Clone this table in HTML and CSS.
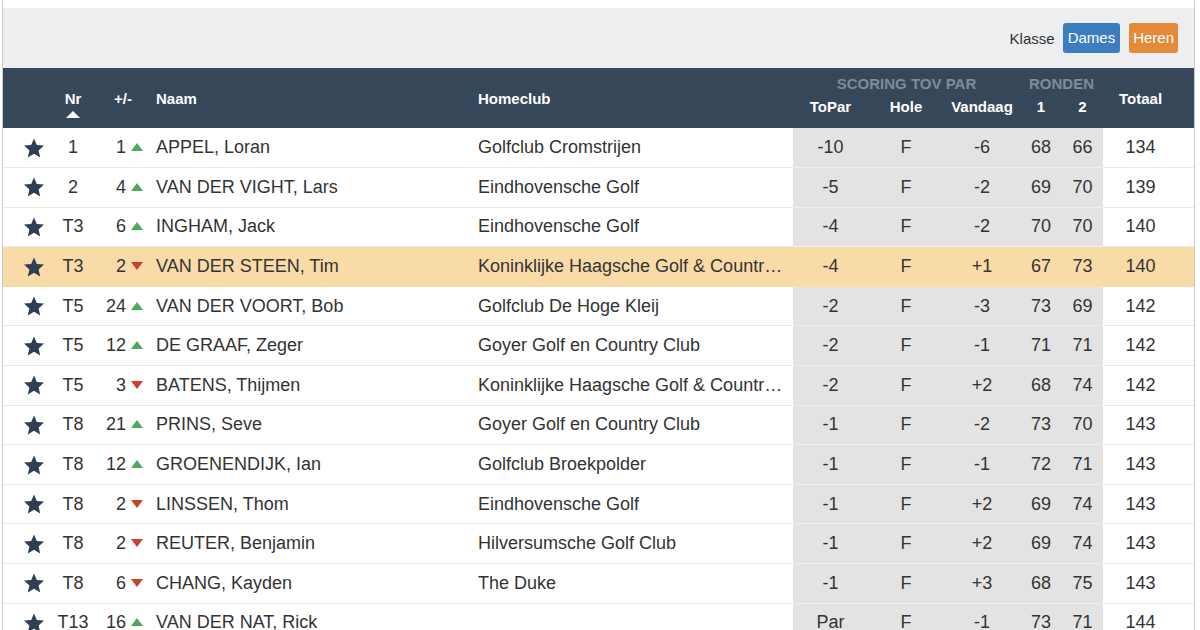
FILE: index.html
```html
<!DOCTYPE html>
<html lang="nl">
<head>
<meta charset="utf-8">
<title>Leaderboard</title>
<link rel="stylesheet" href="styles.css">
</head>
<body>
<div class="page">
  <div class="toolbar">
    <span class="klasse">Klasse</span>
    <span class="btn btn-blue">Dames</span>
    <span class="btn btn-orange">Heren</span>
  </div>
  <table class="board">
    <colgroup>
      <col class="c-star"><col class="c-nr"><col class="c-pm"><col class="c-naam"><col class="c-club">
      <col class="c-topar"><col class="c-hole"><col class="c-vand"><col class="c-r1"><col class="c-r2"><col class="c-tot">
    </colgroup>
    <thead>
      <tr class="h1">
        <th rowspan="2"></th>
        <th rowspan="2" class="center nrh">Nr<span class="sort"></span></th>
        <th rowspan="2" class="left pmh">+/-</th>
        <th rowspan="2" class="left pad">Naam</th>
        <th rowspan="2" class="left pad">Homeclub</th>
        <th colspan="3" class="group">SCORING TOV PAR</th>
        <th colspan="2" class="group">RONDEN</th>
        <th rowspan="2" class="center tot">Totaal</th>
      </tr>
      <tr class="h2">
        <th>ToPar</th><th>Hole</th><th>Vandaag</th><th>1</th><th>2</th>
      </tr>
    </thead>
    <tbody>
      <tr><td class="star"><svg viewBox="0 0 24 24"><path d="M12 1.5l3.1 7.2 7.8.7-5.9 5.2 1.8 7.7L12 18.2l-6.8 4.1 1.8-7.7L1.1 9.4l7.8-.7z"/></svg></td><td class="center">1</td><td class="pm">1<i class="up"></i></td><td class="pad">APPEL, Loran</td><td class="pad club">Golfclub Cromstrijen</td><td class="g">-10</td><td class="g">F</td><td class="g">-6</td><td class="g">68</td><td class="g">66</td><td class="tot">134</td></tr>
      <tr><td class="star"><svg viewBox="0 0 24 24"><path d="M12 1.5l3.1 7.2 7.8.7-5.9 5.2 1.8 7.7L12 18.2l-6.8 4.1 1.8-7.7L1.1 9.4l7.8-.7z"/></svg></td><td class="center">2</td><td class="pm">4<i class="up"></i></td><td class="pad">VAN DER VIGHT, Lars</td><td class="pad club">Eindhovensche Golf</td><td class="g">-5</td><td class="g">F</td><td class="g">-2</td><td class="g">69</td><td class="g">70</td><td class="tot">139</td></tr>
      <tr><td class="star"><svg viewBox="0 0 24 24"><path d="M12 1.5l3.1 7.2 7.8.7-5.9 5.2 1.8 7.7L12 18.2l-6.8 4.1 1.8-7.7L1.1 9.4l7.8-.7z"/></svg></td><td class="center">T3</td><td class="pm">6<i class="up"></i></td><td class="pad">INGHAM, Jack</td><td class="pad club">Eindhovensche Golf</td><td class="g">-4</td><td class="g">F</td><td class="g">-2</td><td class="g">70</td><td class="g">70</td><td class="tot">140</td></tr>
      <tr class="hl"><td class="star"><svg viewBox="0 0 24 24"><path d="M12 1.5l3.1 7.2 7.8.7-5.9 5.2 1.8 7.7L12 18.2l-6.8 4.1 1.8-7.7L1.1 9.4l7.8-.7z"/></svg></td><td class="center">T3</td><td class="pm">2<i class="down"></i></td><td class="pad">VAN DER STEEN, Tim</td><td class="pad club">Koninklijke Haagsche Golf &amp; Country Club</td><td class="g">-4</td><td class="g">F</td><td class="g">+1</td><td class="g">67</td><td class="g">73</td><td class="tot">140</td></tr>
      <tr><td class="star"><svg viewBox="0 0 24 24"><path d="M12 1.5l3.1 7.2 7.8.7-5.9 5.2 1.8 7.7L12 18.2l-6.8 4.1 1.8-7.7L1.1 9.4l7.8-.7z"/></svg></td><td class="center">T5</td><td class="pm">24<i class="up"></i></td><td class="pad">VAN DER VOORT, Bob</td><td class="pad club">Golfclub De Hoge Kleij</td><td class="g">-2</td><td class="g">F</td><td class="g">-3</td><td class="g">73</td><td class="g">69</td><td class="tot">142</td></tr>
      <tr><td class="star"><svg viewBox="0 0 24 24"><path d="M12 1.5l3.1 7.2 7.8.7-5.9 5.2 1.8 7.7L12 18.2l-6.8 4.1 1.8-7.7L1.1 9.4l7.8-.7z"/></svg></td><td class="center">T5</td><td class="pm">12<i class="up"></i></td><td class="pad">DE GRAAF, Zeger</td><td class="pad club">Goyer Golf en Country Club</td><td class="g">-2</td><td class="g">F</td><td class="g">-1</td><td class="g">71</td><td class="g">71</td><td class="tot">142</td></tr>
      <tr><td class="star"><svg viewBox="0 0 24 24"><path d="M12 1.5l3.1 7.2 7.8.7-5.9 5.2 1.8 7.7L12 18.2l-6.8 4.1 1.8-7.7L1.1 9.4l7.8-.7z"/></svg></td><td class="center">T5</td><td class="pm">3<i class="down"></i></td><td class="pad">BATENS, Thijmen</td><td class="pad club">Koninklijke Haagsche Golf &amp; Country Club</td><td class="g">-2</td><td class="g">F</td><td class="g">+2</td><td class="g">68</td><td class="g">74</td><td class="tot">142</td></tr>
      <tr><td class="star"><svg viewBox="0 0 24 24"><path d="M12 1.5l3.1 7.2 7.8.7-5.9 5.2 1.8 7.7L12 18.2l-6.8 4.1 1.8-7.7L1.1 9.4l7.8-.7z"/></svg></td><td class="center">T8</td><td class="pm">21<i class="up"></i></td><td class="pad">PRINS, Seve</td><td class="pad club">Goyer Golf en Country Club</td><td class="g">-1</td><td class="g">F</td><td class="g">-2</td><td class="g">73</td><td class="g">70</td><td class="tot">143</td></tr>
      <tr><td class="star"><svg viewBox="0 0 24 24"><path d="M12 1.5l3.1 7.2 7.8.7-5.9 5.2 1.8 7.7L12 18.2l-6.8 4.1 1.8-7.7L1.1 9.4l7.8-.7z"/></svg></td><td class="center">T8</td><td class="pm">12<i class="up"></i></td><td class="pad">GROENENDIJK, Ian</td><td class="pad club">Golfclub Broekpolder</td><td class="g">-1</td><td class="g">F</td><td class="g">-1</td><td class="g">72</td><td class="g">71</td><td class="tot">143</td></tr>
      <tr><td class="star"><svg viewBox="0 0 24 24"><path d="M12 1.5l3.1 7.2 7.8.7-5.9 5.2 1.8 7.7L12 18.2l-6.8 4.1 1.8-7.7L1.1 9.4l7.8-.7z"/></svg></td><td class="center">T8</td><td class="pm">2<i class="down"></i></td><td class="pad">LINSSEN, Thom</td><td class="pad club">Eindhovensche Golf</td><td class="g">-1</td><td class="g">F</td><td class="g">+2</td><td class="g">69</td><td class="g">74</td><td class="tot">143</td></tr>
      <tr><td class="star"><svg viewBox="0 0 24 24"><path d="M12 1.5l3.1 7.2 7.8.7-5.9 5.2 1.8 7.7L12 18.2l-6.8 4.1 1.8-7.7L1.1 9.4l7.8-.7z"/></svg></td><td class="center">T8</td><td class="pm">2<i class="down"></i></td><td class="pad">REUTER, Benjamin</td><td class="pad club">Hilversumsche Golf Club</td><td class="g">-1</td><td class="g">F</td><td class="g">+2</td><td class="g">69</td><td class="g">74</td><td class="tot">143</td></tr>
      <tr><td class="star"><svg viewBox="0 0 24 24"><path d="M12 1.5l3.1 7.2 7.8.7-5.9 5.2 1.8 7.7L12 18.2l-6.8 4.1 1.8-7.7L1.1 9.4l7.8-.7z"/></svg></td><td class="center">T8</td><td class="pm">6<i class="down"></i></td><td class="pad">CHANG, Kayden</td><td class="pad club">The Duke</td><td class="g">-1</td><td class="g">F</td><td class="g">+3</td><td class="g">68</td><td class="g">75</td><td class="tot">143</td></tr>
      <tr><td class="star"><svg viewBox="0 0 24 24"><path d="M12 1.5l3.1 7.2 7.8.7-5.9 5.2 1.8 7.7L12 18.2l-6.8 4.1 1.8-7.7L1.1 9.4l7.8-.7z"/></svg></td><td class="center">T13</td><td class="pm">16<i class="up"></i></td><td class="pad">VAN DER NAT, Rick</td><td class="pad club"></td><td class="g">Par</td><td class="g">F</td><td class="g">-1</td><td class="g">73</td><td class="g">71</td><td class="tot">144</td></tr>
    </tbody>
  </table>
</div>
</body>
</html>
```

FILE: styles.css
```css
* { box-sizing: border-box; }
html, body { margin: 0; padding: 0; background: #fff; }
body {
  font-family: "Liberation Sans", Arial, sans-serif;
  color: #333;
  height: 630px;
  overflow: hidden;
}
.page {
  margin-left: 2px;
  width: 1193px;
  min-height: 630px;
  border-left: 1px solid #c9c9c9;
  border-right: 1px solid #c9c9c9;
  padding-top: 8px;
}
.toolbar {
  height: 60px;
  background: #eceeef;
  display: flex;
  align-items: center;
  justify-content: flex-end;
  padding-right: 16px;
  gap: 9px;
  font-size: 15px;
}
.klasse { color: #333; margin-right: -1px; }
.btn {
  height: 30px;
  line-height: 30px;
  padding: 0 5px;
  border-radius: 3px;
  color: #fff;
}
.btn-blue { background: #3b7dbf; }
.btn-orange { background: #e38a3b; padding: 0 4px; }

.board {
  width: 1191px;
  border-collapse: collapse;
  table-layout: fixed;
}
.c-star { width: 50px; }
.c-nr { width: 40px; }
.c-pm { width: 55px; }
.c-naam { width: 322px; }
.c-club { width: 323px; }
.c-topar { width: 75px; }
.c-hole { width: 76px; }
.c-vand { width: 76px; }
.c-r1 { width: 42px; }
.c-r2 { width: 41px; }
.c-tot { width: 91px; }

thead { background: #36475a; color: #fff; }
thead th {
  font-size: 15px;
  font-weight: bold;
  padding: 0;
  line-height: 17px;
  white-space: nowrap;
}
.h1 { height: 30px; }
.h2 { height: 30px; }
.h1 th { vertical-align: middle; }
.h1 th[rowspan] { vertical-align: middle; }
.h2 th { vertical-align: top; text-align: center; }
th.group { color: #7e8c9b; text-align: center; }
th.left { text-align: left; }
th.pad { padding-left: 8px; }
th.pmh { padding-left: 21px; }
th.center { text-align: center; }
th.tot { padding-right: 16px; }
.nrh { position: relative; }
.sort {
  position: absolute;
  left: 50%;
  top: 43px;
  margin-left: -7px;
  width: 0; height: 0;
  border-left: 7px solid transparent;
  border-right: 7px solid transparent;
  border-bottom: 7px solid #fff;
}

tbody td {
  height: 39.6px;
  padding: 0;
  font-size: 18px;
  border-bottom: 1px solid #e9e9e9;
  text-align: center;
  white-space: nowrap;
  color: #333;
}
tbody td.pad { text-align: left; padding-left: 8px; padding-right: 7px; overflow: hidden; text-overflow: ellipsis; }
tbody td.g { background: #e3e3e3; border-bottom-color: #efefef; }
tbody td.tot { padding-right: 16px; }
tbody td.pm { text-align: right; padding-right: 5px; }
tbody td.star { text-align: left; padding-left: 20px; }
.star svg { width: 22px; height: 22px; fill: #2d3e55; display: block; }

tbody tr.hl td { background: #f9dba8; border-bottom-color: #f9dba8; }

i.up, i.down {
  display: inline-block;
  width: 0; height: 0;
  margin-left: 5px;
  border-left: 6px solid transparent;
  border-right: 6px solid transparent;
  vertical-align: 2px;
}
i.up { border-bottom: 8px solid #4ea85b; }
i.down { border-top: 8px solid #c9402e; }
```
